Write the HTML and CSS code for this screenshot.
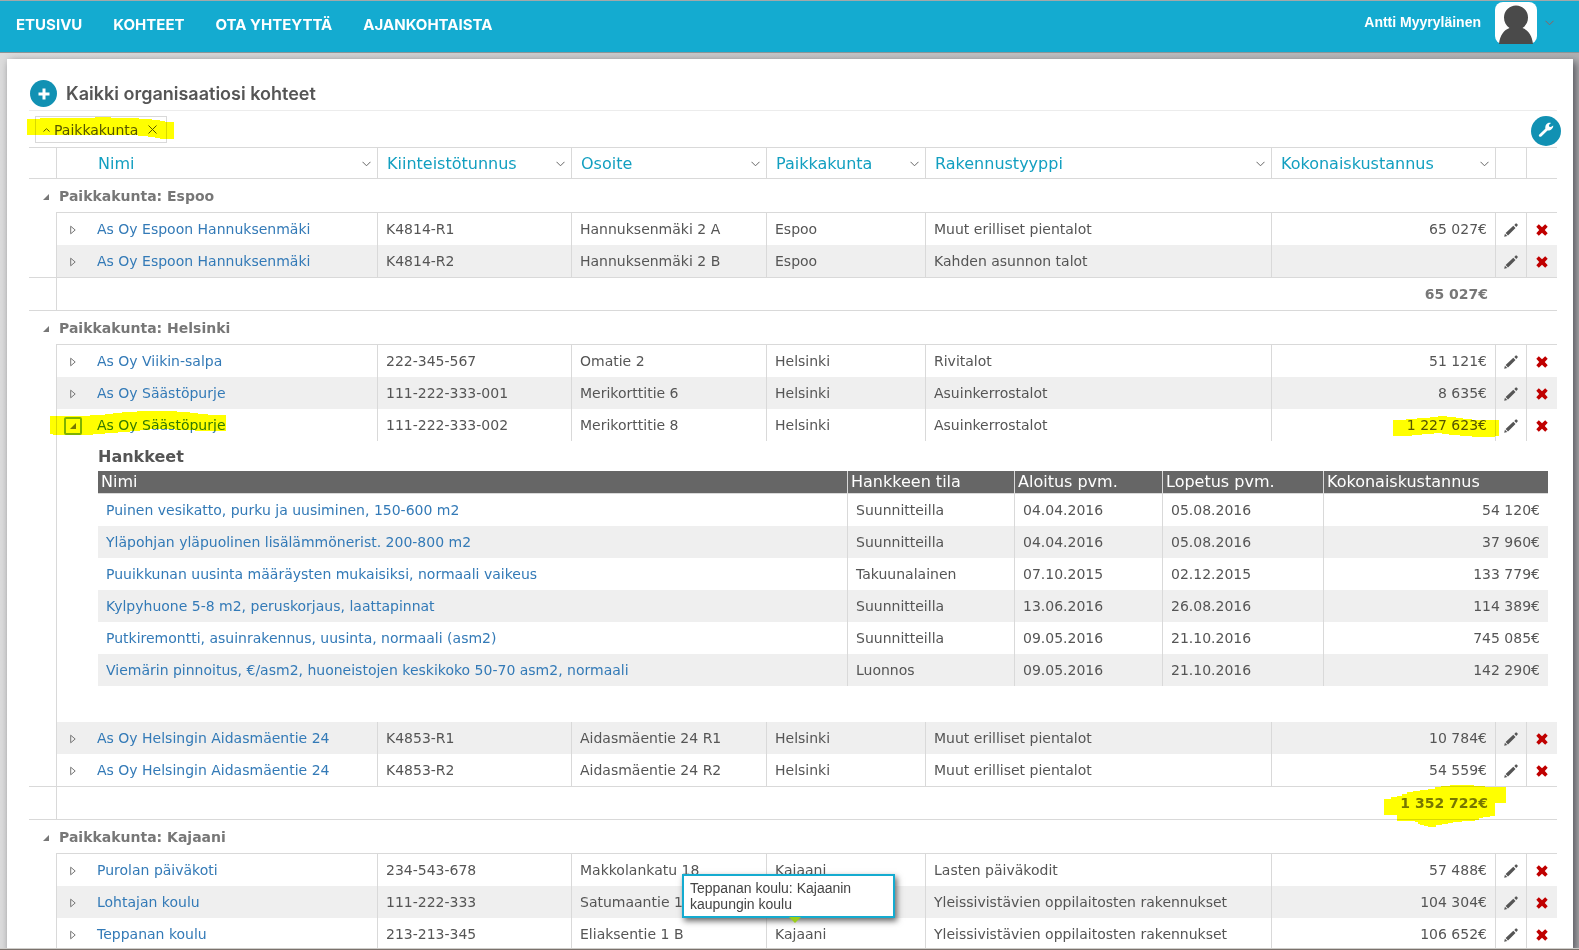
FILE: index.html
```html
<!DOCTYPE html>
<html lang="fi">
<head>
<meta charset="utf-8">
<title>Kohteet</title>
<link rel="stylesheet" href="styles.css">
</head>
<body>
<svg class="sprite" aria-hidden="true">
  <symbol id="pencil" viewBox="0 0 14 14"><path d="M0.2 13.800 L0.9 10.700 L3.300 13.100 Z M1.600 9.900 L9.300 2.700 L11.500 4.900 L4 12.400 Z M10.300 1.900 L11.700 0.600 Q12.200 0.200 12.700 0.600 L13.600 1.500 Q14 1.900 13.600 2.400 L12.300 3.900 Z"/></symbol>
  <symbol id="cross" viewBox="0 0 12 12"><path d="M0.3 2.8 L2.8 0.3 L6 3.2 L9.2 0.3 L11.7 2.8 L8.8 6 L11.7 9.2 L9.2 11.7 L6 8.8 L2.8 11.7 L0.3 9.2 L3.2 6 Z"/></symbol>
  <symbol id="closed" viewBox="0 0 6 10"><path d="M0.7 1.2 L5.2 5 L0.7 8.8 Z" fill="none" stroke="currentColor"/></symbol>
  <symbol id="open" viewBox="0 0 6 6"><path d="M6 0 V6 H0 Z"/></symbol>
  <symbol id="chevron" viewBox="0 0 9 6"><path d="M0.5 0.8 L4.5 4.8 L8.5 0.8" fill="none" stroke="currentColor"/></symbol>
</svg>

<header class="topbar">
  <nav class="nav">
    <a href="#">ETUSIVU</a>
    <a href="#">KOHTEET</a>
    <a href="#">OTA YHTEYTTÄ</a>
    <a href="#">AJANKOHTAISTA</a>
  </nav>
  <button class="user" type="button">
    <span class="user-name">Antti Myyryläinen</span>
    <svg class="avatar" viewBox="0 0 42 42"><rect width="42" height="42" rx="8" fill="#fff"/><path d="M4 42 C5 33 9 28 14.500 26 C11 23.500 9 20 9 15.500 A12 12 0 0 1 33 15.500 C33 20 31 23.500 27.500 26 C33 28 37 33 38 42 Z" fill="#4a4a4a"/></svg>
    <svg class="chev"><use href="#chevron"/></svg>
  </button>
</header>

<main class="page">
<section class="panel">
  <div class="title">
    <button class="round add" type="button" aria-label="Lisää kohde"><svg viewBox="0 0 12 12" width="12" height="12"><path d="M4.500 0.500h3v4h4v3h-4v4h-3v-4h-4v-3h4z"/></svg></button>
    <h1>Kaikki organisaatiosi kohteet</h1>
  </div>
  <div class="tools">
    <div class="chip">
      <svg class="caret" viewBox="0 0 7 4"><path d="M0.500 3.500 L3.500 0.700 L6.500 3.500" fill="none" stroke="currentColor"/></svg>
      <span>Paikkakunta</span>
      <button class="bare" type="button" aria-label="Poista ryhmittely"><svg class="x" viewBox="0 0 9 9"><path d="M0.500 0.500 L8.500 8.500 M8.500 0.500 L0.500 8.500" fill="none" stroke="currentColor"/></svg></button>
      <svg class="mark mark-chip" viewBox="27 117 147 22"><path d="M27 119H40V118H95V117H111V118H139V119H152V120H160V121H165V122H174V139H160V138H155V137H148V136H138V135H27Z"/></svg>
    </div>
    <button class="round wrench" type="button" aria-label="Asetukset"><svg viewBox="0 0 16 16" width="16" height="16"><path d="M1.300 12.400 L7.300 6.700 C7 4.500 7.900 2 10 1.100 C11.200 0.600 12.200 0.700 13 1 L10.900 2.900 L11.200 4.700 L12.900 5.100 L15.200 3.400 C15.500 6.400 12.800 8.600 9.500 8.400 L3.300 14.400 C2.700 15 1.900 15 1.300 14.400 C0.700 13.800 0.700 13 1.300 12.400 Z"/></svg></button>
  </div>

  <table class="grid">
    <colgroup><col class="c-gutter"><col class="c-expand"><col class="c-name"><col class="c-id"><col class="c-addr"><col class="c-city"><col class="c-type"><col class="c-cost"><col class="c-act"><col class="c-act"></colgroup>
    <thead>
      <tr>
        <th></th><th></th>
        <th class="joined"><div class="head">Nimi<button class="bare" type="button" aria-label="Nimi valikko"><svg class="chev"><use href="#chevron"/></svg></button></div></th>
        <th><div class="head">Kiinteistötunnus<button class="bare" type="button" aria-label="Kiinteistötunnus valikko"><svg class="chev"><use href="#chevron"/></svg></button></div></th>
        <th><div class="head">Osoite<button class="bare" type="button" aria-label="Osoite valikko"><svg class="chev"><use href="#chevron"/></svg></button></div></th>
        <th><div class="head">Paikkakunta<button class="bare" type="button" aria-label="Paikkakunta valikko"><svg class="chev"><use href="#chevron"/></svg></button></div></th>
        <th><div class="head">Rakennustyyppi<button class="bare" type="button" aria-label="Rakennustyyppi valikko"><svg class="chev"><use href="#chevron"/></svg></button></div></th>
        <th><div class="head">Kokonaiskustannus<button class="bare" type="button" aria-label="Kokonaiskustannus valikko"><svg class="chev"><use href="#chevron"/></svg></button></div></th>
        <th></th><th></th>
      </tr>
    </thead>

    <tbody>
      <tr class="group"><td colspan="10"><button class="bare" type="button"><svg class="open"><use href="#open"/></svg>Paikkakunta: Espoo</button></td></tr>
      <tr class="row first"><td class="gutter"></td><td class="exp"><button class="bare" type="button" aria-label="Avaa"><svg class="closed"><use href="#closed"/></svg></button></td><td class="joined"><a href="#">As Oy Espoon Hannuksenmäki</a></td><td>K4814-R1</td><td>Hannuksenmäki 2 A</td><td>Espoo</td><td>Muut erilliset pientalot</td><td class="num">65 027€</td><td class="act"><button class="bare" type="button" aria-label="Muokkaa"><svg class="pencil"><use href="#pencil"/></svg></button></td><td class="act"><button class="bare" type="button" aria-label="Poista"><svg class="cross"><use href="#cross"/></svg></button></td></tr>
      <tr class="row alt"><td class="gutter"></td><td class="exp"><button class="bare" type="button" aria-label="Avaa"><svg class="closed"><use href="#closed"/></svg></button></td><td class="joined"><a href="#">As Oy Espoon Hannuksenmäki</a></td><td>K4814-R2</td><td>Hannuksenmäki 2 B</td><td>Espoo</td><td>Kahden asunnon talot</td><td class="num"></td><td class="act"><button class="bare" type="button" aria-label="Muokkaa"><svg class="pencil"><use href="#pencil"/></svg></button></td><td class="act"><button class="bare" type="button" aria-label="Poista"><svg class="cross"><use href="#cross"/></svg></button></td></tr>
      <tr class="sum"><td></td><td class="ruled num" colspan="7">65 027€</td><td colspan="2"></td></tr>
    </tbody>

    <tbody>
      <tr class="group"><td colspan="10"><button class="bare" type="button"><svg class="open"><use href="#open"/></svg>Paikkakunta: Helsinki</button></td></tr>
      <tr class="row first"><td class="gutter"></td><td class="exp"><button class="bare" type="button" aria-label="Avaa"><svg class="closed"><use href="#closed"/></svg></button></td><td class="joined"><a href="#">As Oy Viikin-salpa</a></td><td>222-345-567</td><td>Omatie 2</td><td>Helsinki</td><td>Rivitalot</td><td class="num">51 121€</td><td class="act"><button class="bare" type="button" aria-label="Muokkaa"><svg class="pencil"><use href="#pencil"/></svg></button></td><td class="act"><button class="bare" type="button" aria-label="Poista"><svg class="cross"><use href="#cross"/></svg></button></td></tr>
      <tr class="row alt"><td class="gutter"></td><td class="exp"><button class="bare" type="button" aria-label="Avaa"><svg class="closed"><use href="#closed"/></svg></button></td><td class="joined"><a href="#">As Oy Säästöpurje</a></td><td>111-222-333-001</td><td>Merikorttitie 6</td><td>Helsinki</td><td>Asuinkerrostalot</td><td class="num">8 635€</td><td class="act"><button class="bare" type="button" aria-label="Muokkaa"><svg class="pencil"><use href="#pencil"/></svg></button></td><td class="act"><button class="bare" type="button" aria-label="Poista"><svg class="cross"><use href="#cross"/></svg></button></td></tr>
      <tr class="row"><td class="gutter"></td><td class="exp marked"><button class="bare focused" type="button" aria-label="Sulje"><svg class="open"><use href="#open"/></svg></button><svg class="mark mark-row" viewBox="50 411 176 24"><path d="M50 416H90V415H105V414H113V413H122V412H137V411H177V412H190V413H198V414H208V415H226V431H195V430H175V429H150V430H140V431H130V432H118V433H105V434H93V435H53V434H50Z"/></svg></td><td class="joined"><a href="#">As Oy Säästöpurje</a></td><td>111-222-333-002</td><td>Merikorttitie 8</td><td>Helsinki</td><td>Asuinkerrostalot</td><td class="num marked">1 227 623€<svg class="mark mark-cost" viewBox="1393 416 106 21"><path d="M1393 420H1406V419H1417V418H1430V417H1438V416H1447V417H1456V418H1463V419H1472V420H1499V436H1495V437H1472V436H1460V435H1449V434H1442V433H1434V434H1422V435H1412V436H1393Z"/></svg></td><td class="act"><button class="bare" type="button" aria-label="Muokkaa"><svg class="pencil"><use href="#pencil"/></svg></button></td><td class="act"><button class="bare" type="button" aria-label="Poista"><svg class="cross"><use href="#cross"/></svg></button></td></tr>
      <tr class="detail"><td class="gutter"></td><td class="ruled" colspan="9">
        <h2>Hankkeet</h2>
        <table class="projects">
          <colgroup><col class="p-name"><col class="p-state"><col class="p-start"><col class="p-end"><col class="p-cost"></colgroup>
          <thead><tr><th>Nimi</th><th>Hankkeen tila</th><th>Aloitus pvm.</th><th>Lopetus pvm.</th><th>Kokonaiskustannus</th></tr></thead>
          <tbody>
            <tr><td><a href="#">Puinen vesikatto, purku ja uusiminen, 150-600 m2</a></td><td>Suunnitteilla</td><td>04.04.2016</td><td>05.08.2016</td><td class="num">54 120€</td></tr>
            <tr class="alt"><td><a href="#">Yläpohjan yläpuolinen lisälämmönerist. 200-800 m2</a></td><td>Suunnitteilla</td><td>04.04.2016</td><td>05.08.2016</td><td class="num">37 960€</td></tr>
            <tr><td><a href="#">Puuikkunan uusinta määräysten mukaisiksi, normaali vaikeus</a></td><td>Takuunalainen</td><td>07.10.2015</td><td>02.12.2015</td><td class="num">133 779€</td></tr>
            <tr class="alt"><td><a href="#">Kylpyhuone 5-8 m2, peruskorjaus, laattapinnat</a></td><td>Suunnitteilla</td><td>13.06.2016</td><td>26.08.2016</td><td class="num">114 389€</td></tr>
            <tr><td><a href="#">Putkiremontti, asuinrakennus, uusinta, normaali (asm2)</a></td><td>Suunnitteilla</td><td>09.05.2016</td><td>21.10.2016</td><td class="num">745 085€</td></tr>
            <tr class="alt"><td><a href="#">Viemärin pinnoitus, €/asm2, huoneistojen keskikoko 50-70 asm2, normaali</a></td><td>Luonnos</td><td>09.05.2016</td><td>21.10.2016</td><td class="num">142 290€</td></tr>
          </tbody>
        </table>
      </td></tr>
      <tr class="row alt"><td class="gutter"></td><td class="exp"><button class="bare" type="button" aria-label="Avaa"><svg class="closed"><use href="#closed"/></svg></button></td><td class="joined"><a href="#">As Oy Helsingin Aidasmäentie 24</a></td><td>K4853-R1</td><td>Aidasmäentie 24 R1</td><td>Helsinki</td><td>Muut erilliset pientalot</td><td class="num">10 784€</td><td class="act"><button class="bare" type="button" aria-label="Muokkaa"><svg class="pencil"><use href="#pencil"/></svg></button></td><td class="act"><button class="bare" type="button" aria-label="Poista"><svg class="cross"><use href="#cross"/></svg></button></td></tr>
      <tr class="row"><td class="gutter"></td><td class="exp"><button class="bare" type="button" aria-label="Avaa"><svg class="closed"><use href="#closed"/></svg></button></td><td class="joined"><a href="#">As Oy Helsingin Aidasmäentie 24</a></td><td>K4853-R2</td><td>Aidasmäentie 24 R2</td><td>Helsinki</td><td>Muut erilliset pientalot</td><td class="num">54 559€</td><td class="act"><button class="bare" type="button" aria-label="Muokkaa"><svg class="pencil"><use href="#pencil"/></svg></button></td><td class="act"><button class="bare" type="button" aria-label="Poista"><svg class="cross"><use href="#cross"/></svg></button></td></tr>
      <tr class="sum"><td></td><td class="ruled num marked" colspan="7">1 352 722€<svg class="mark mark-sum" viewBox="1384 785 122 42"><path d="M1384 799H1391V797H1397V796H1402V794H1407V792H1413V791H1420V790H1428V789H1435V787H1441V786H1450V785H1474V786H1485V787H1506V803H1495V816H1490V817H1483V818H1479V820H1475V821H1462V822H1453V823H1448V824H1442V825H1436V827H1428V826H1424V825H1420V824H1418V822H1415V821H1397V815H1384Z"/></svg></td><td colspan="2"></td></tr>
    </tbody>

    <tbody>
      <tr class="group"><td colspan="10"><button class="bare" type="button"><svg class="open"><use href="#open"/></svg>Paikkakunta: Kajaani</button></td></tr>
      <tr class="row first"><td class="gutter"></td><td class="exp"><button class="bare" type="button" aria-label="Avaa"><svg class="closed"><use href="#closed"/></svg></button></td><td class="joined"><a href="#">Purolan päiväkoti</a></td><td>234-543-678</td><td>Makkolankatu 18</td><td>Kajaani</td><td>Lasten päiväkodit</td><td class="num">57 488€</td><td class="act"><button class="bare" type="button" aria-label="Muokkaa"><svg class="pencil"><use href="#pencil"/></svg></button></td><td class="act"><button class="bare" type="button" aria-label="Poista"><svg class="cross"><use href="#cross"/></svg></button></td></tr>
      <tr class="row alt"><td class="gutter"></td><td class="exp"><button class="bare" type="button" aria-label="Avaa"><svg class="closed"><use href="#closed"/></svg></button></td><td class="joined"><a href="#">Lohtajan koulu</a></td><td>111-222-333</td><td>Satumaantie 1</td><td></td><td>Yleissivistävien oppilaitosten rakennukset</td><td class="num">104 304€</td><td class="act"><button class="bare" type="button" aria-label="Muokkaa"><svg class="pencil"><use href="#pencil"/></svg></button></td><td class="act"><button class="bare" type="button" aria-label="Poista"><svg class="cross"><use href="#cross"/></svg></button></td></tr>
      <tr class="row"><td class="gutter"></td><td class="exp"><button class="bare" type="button" aria-label="Avaa"><svg class="closed"><use href="#closed"/></svg></button></td><td class="joined"><a href="#">Teppanan koulu</a></td><td>213-213-345</td><td>Eliaksentie 1 B</td><td class="marked">Kajaani<div class="tip" role="tooltip">Teppanan koulu: Kajaanin kaupungin koulu</div></td><td>Yleissivistävien oppilaitosten rakennukset</td><td class="num">106 652€</td><td class="act"><button class="bare" type="button" aria-label="Muokkaa"><svg class="pencil"><use href="#pencil"/></svg></button></td><td class="act"><button class="bare" type="button" aria-label="Poista"><svg class="cross"><use href="#cross"/></svg></button></td></tr>
    </tbody>
  </table>
</section>
</main>
</body>
</html>
```
FILE: styles.css
```css
* { box-sizing: border-box; }

body {
  margin: 0;
  height: 100vh;
  display: flex;
  flex-direction: column;
  overflow: hidden;
  border-top: 1px solid #a3a8a9;
  border-bottom: 1px solid #7a726c;
  font: 14px/20px "DejaVu Sans", Verdana, sans-serif;
  color: #555;
}

.sprite { position: absolute; width: 0; height: 0; }
svg { display: block; flex: none; fill: currentColor; }
a { color: #337ab7; text-decoration: none; }

button { font: inherit; color: inherit; border: 0; padding: 0; cursor: pointer; }
.bare { background: none; display: flex; align-items: center; }

/* Top bar */
.topbar {
  flex: none;
  display: flex;
  justify-content: space-between;
  align-items: flex-start;
  height: 52px;
  padding: 0 25px 0 16px;
  background: #14abd0;
  border-bottom: 1px solid #8d9496;
}
.nav { display: flex; gap: 31px; }
.nav a {
  color: #fff;
  font: 700 15px/48px Inter, "Open Sans", sans-serif;
}
.user { display: flex; align-items: flex-start; background: none; padding-top: 1px; }
.user-name {
  margin: 10px 14px 0 0;
  color: #fff;
  font: bold 14px/20px "Liberation Sans", Arial, sans-serif;
}
.avatar { width: 42px; height: 42px; }
.user .chev { margin: 18px 0 0 8px; color: #96605c; }
.chev { width: 9px; height: 6px; }

/* Page and panel */
.page {
  flex: 1;
  min-height: 0;
  overflow: hidden;
  padding: 6px 6px 0 7px;
  background: linear-gradient(to right, #dcdcdc, #b0b0b2);
  border-bottom: 1px solid #cfcdca;
}
.panel {
  padding: 0 12px 0 22px;
  background: #fff;
  box-shadow: 3px 3px 8px #55555c;
}
.title {
  display: flex;
  align-items: center;
  gap: 9px;
  margin-right: 4px;
  padding: 18px 0 0 1px;
  height: 52px;
  border-bottom: 1px solid #ececec;
}
h1 {
  margin: 0;
  font: 600 18px/24px Inter, "Open Sans", sans-serif;
}
.round {
  display: flex;
  align-items: center;
  justify-content: center;
  border-radius: 50%;
  background: #1191b3;
  color: #fff;
}
.add { width: 27px; height: 27px; }
.wrench { width: 30px; height: 30px; padding-bottom: 2px; }

.tools {
  display: flex;
  justify-content: space-between;
  align-items: flex-start;
  padding: 5px 0 0 6px;
  height: 36px;
}
.chip {
  position: relative;
  display: flex;
  align-items: center;
  height: 27px;
  padding: 0 9px 0 7px;
  border: 1px solid #d9d9d9;
}
.chip span { margin: 0 10px 0 4px; }
.caret { width: 7px; height: 4px; }
.x { width: 9px; height: 9px; }

/* Main grid */
table { width: 100%; table-layout: fixed; border-collapse: separate; border-spacing: 0; }
.grid { width: calc(100% - 4px); }
.c-gutter { width: 27px; }
.c-expand { width: 33px; }
.c-name { width: 288px; }
.c-id { width: 194px; }
.c-addr { width: 195px; }
.c-city { width: 159px; }
.c-type { width: 346px; }
.c-cost { width: 224px; }
.c-act { width: 31px; }

th { font-weight: normal; text-align: left; }
.grid > thead th {
  height: 32px;
  padding: 1px 6px 0 9px;
  border: solid #d9d9d9;
  border-width: 1px 0 1px 1px;
  color: #129fc0;
  font-size: 16px;
}
.grid > thead th:first-child { border-left: 0; }
.grid > thead .joined { border-left: 0; }
.head { display: flex; justify-content: space-between; align-items: center; }
.head .chev { color: #666; }

.group td { height: 33px; padding: 0 0 0 14px; font-weight: bold; color: #777; }
.group .open { margin: 2px 10px 0 0; }
.open { width: 6px; height: 6px; }

.row td {
  height: 32px;
  padding: 0 8px;
  border-left: 1px solid #d9d9d9;
  white-space: nowrap;
}
.row.first td { height: 33px; border-top: 1px solid #d9d9d9; }
.row td.joined { border-left: 0; }
.row td.gutter { border: 0; padding: 0; }
.alt td { background: #efefef; }
.alt td.gutter { background: none; }
.num { text-align: right; }
.row .exp { padding: 0; }
.exp .bare { width: 18px; height: 18px; justify-content: center; margin: 2px 0 0 7px; color: #777; }
.closed { width: 6px; height: 10px; }
.exp .focused { border: 2px solid #7fb2ff; border-radius: 2px; }
.row .act { padding: 0; }
.act .bare { margin: 2px auto 0; }
.pencil { width: 14px; height: 14px; }
.cross { width: 12px; height: 12px; color: #c00000; }

.sum td {
  height: 34px;
  padding: 0 7px;
  border: solid #d9d9d9;
  border-width: 1px 0;
  font-weight: bold;
  color: #777;
}
.sum .ruled { border-left-width: 1px; }

/* Project list inside an opened row */
.detail .gutter { padding: 0; }
.detail .ruled { padding: 0 9px 36px 41px; border-left: 1px solid #d9d9d9; }
h2 { margin: 0; padding-top: 2px; font: bold 16px/28px "DejaVu Sans", Verdana, sans-serif; }
.p-name { width: 749px; }
.p-state { width: 167px; }
.p-start { width: 148px; }
.p-end { width: 161px; }
.p-cost { width: 225px; }
.projects th {
  height: 23px;
  padding: 0 3px;
  background: #666;
  color: #fff;
  font-size: 16px;
  border-bottom: 1px solid #d9d9d9;
}
.projects td { height: 32px; padding: 0 8px; }
.projects th + th, .projects td + td { border-left: 1px solid #d9d9d9; }

/* Marker strokes laid over the content */
.marked { position: relative; }
.mark { position: absolute; fill: #ff0; mix-blend-mode: multiply; pointer-events: none; }
.mark-chip { left: -9px; top: 0; width: 147px; height: 22px; }
.mark-row { left: -7px; top: 2px; width: 176px; height: 24px; }
.mark-cost { right: -4px; top: 7px; width: 106px; height: 21px; }
.mark-sum { right: -11px; top: -2px; width: 122px; height: 42px; }

.tip {
  position: absolute;
  left: -85px;
  top: -44px;
  width: 213px;
  height: 44px;
  padding: 4px 6px;
  border: 2px solid #14abd0;
  background: #fff;
  box-shadow: 2px 3px 6px #666;
  color: #444;
  font: 14px/16px "Liberation Sans", Arial, sans-serif;
  white-space: normal;
}
.tip::after {
  content: "";
  position: absolute;
  left: 105px;
  top: 41px;
  border: solid transparent;
  border-width: 6px 6px 0;
  border-top-color: #9acd19;
}
```
